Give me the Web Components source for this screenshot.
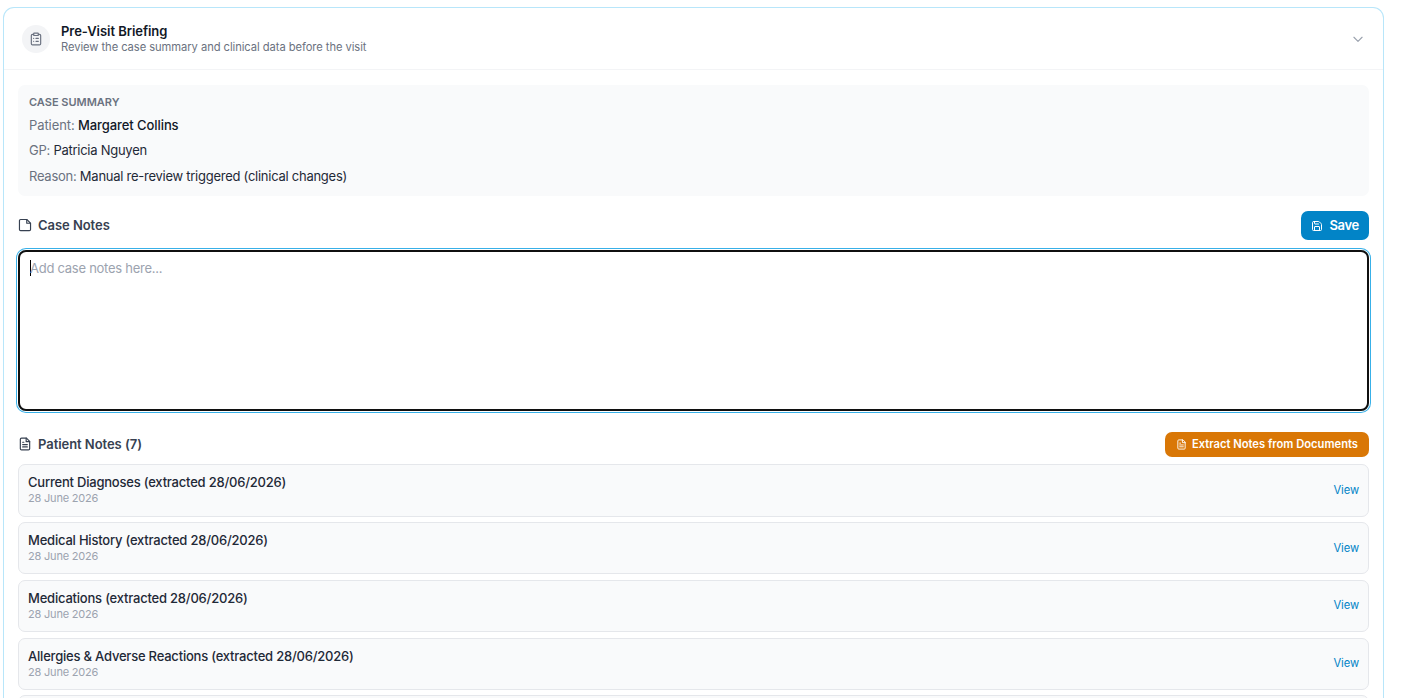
<!DOCTYPE html>
<html lang="en">
<head>
<meta charset="utf-8">
<title>Pre-Visit Briefing</title>
<style>
  body {
    margin: 0;
    height: 698px;
    overflow: hidden;
    background: #fff;
    color: #1f2937;
    font-family: Inter, "Liberation Sans", sans-serif;
    font-size: 13px;
  }

  .patient {
    color: #111827;
    font-weight: 500;
    letter-spacing: -0.08px;
  }

  .case-bar {
    height: 29px;
    margin-top: 15px;
  }

  .patient-bar {
    height: 25px;
    margin-top: 21px;
  }

  .extract {
    --btn-bg: #d97706;
    --btn-padding: 0 11px 0 11px;
    --btn-height: 25px;
    --btn-gap: 5px;
    --btn-icon: 11px;
    --btn-lift: 2px;
    font-size: 11.2px;
    letter-spacing: 0;
  }
</style>
</head>
<body>
<briefing-card heading="Pre-Visit Briefing" subheading="Review the case summary and clinical data before the visit">
  <case-summary>
    <summary-row class="patient" label="Patient:">Margaret Collins</summary-row>
    <summary-row label="GP:">Patricia Nguyen</summary-row>
    <summary-row label="Reason:">Manual re-review triggered (clinical changes)</summary-row>
  </case-summary>
  <section-bar class="case-bar" icon="note" heading="Case Notes">
    <action-button icon="save">Save</action-button>
  </section-bar>
  <notes-field placeholder="Add case notes here..."></notes-field>
  <section-bar class="patient-bar" icon="document" heading="Patient Notes (7)">
    <action-button class="extract" icon="document">Extract Notes from Documents</action-button>
  </section-bar>
  <note-list>
    <note-item date="28 June 2026">Current Diagnoses (extracted 28/06/2026)</note-item>
    <note-item date="28 June 2026">Medical History (extracted 28/06/2026)</note-item>
    <note-item date="28 June 2026">Medications (extracted 28/06/2026)</note-item>
    <note-item date="28 June 2026">Allergies &amp; Adverse Reactions (extracted 28/06/2026)</note-item>
    <note-item></note-item>
  </note-list>
</briefing-card>

<script>
const ICONS = {
  clipboard: `<rect x="8" y="2" width="8" height="4" rx="1"/>
    <path d="M16 4h2a2 2 0 0 1 2 2v14a2 2 0 0 1-2 2H6a2 2 0 0 1-2-2V6a2 2 0 0 1 2-2h2M12 11h4M12 16h4M8 11h.01M8 16h.01"/>`,
  note: `<path d="M15 2.500H4.500a2 2 0 0 0-2 2v15a2 2 0 0 0 2 2h15a2 2 0 0 0 2-2V9z"/><path d="M15 2.500V9h6.500"/>`,
  document: `<path d="M14.5 2H6a2 2 0 0 0-2 2v16a2 2 0 0 0 2 2h12a2 2 0 0 0 2-2V7.500z"/>
    <path d="M14 2v6h6M16 13H8M16 17H8M10 9H8"/>`,
  save: `<path d="M15.200 3a2 2 0 0 1 1.400.6l3.800 3.800a2 2 0 0 1 .6 1.400V19a2 2 0 0 1-2 2H5a2 2 0 0 1-2-2V5a2 2 0 0 1 2-2z"/>
    <path d="M17 21v-7a1 1 0 0 0-1-1H8a1 1 0 0 0-1 1v7M7 3v4a1 1 0 0 0 1 1h7"/>`,
  chevron: `<path d="m5 9 7 7 7-7"/>`,
};

function mount(element, markup) {
  const template = document.createElement('template');
  template.innerHTML = markup;
  element.attachShadow({mode: 'open'});
  element.shadowRoot.appendChild(template.content.cloneNode(true));
}

class UiIcon extends HTMLElement {
  connectedCallback() {
    mount(this, `
      <style>
        :host { display: block; flex: none; width: 14px; height: 14px; }
        svg { display: block; width: 100%; height: 100%; }
      </style>
      <svg viewBox="0 0 24 24" fill="none" stroke="currentColor" stroke-width="2"
        stroke-linecap="round" stroke-linejoin="round">${ICONS[this.getAttribute('name')]}</svg>`);
  }
}

class BriefingCard extends HTMLElement {
  connectedCallback() {
    mount(this, `
      <style>
        :host {
          display: block;
          box-sizing: border-box;
          width: 1381px;
          height: 691px;
          margin: 7px 0 0 3px;
          overflow: hidden;
          border: 1px solid #b8e6fa;
          border-bottom: 0;
          border-radius: 11px 11px 0 0;
        }
        header {
          display: flex;
          align-items: center;
          box-sizing: border-box;
          height: 62px;
          padding: 0 18px;
          border-bottom: 1px solid #f3f4f6;
        }
        .badge {
          display: grid;
          place-items: center;
          width: 28px;
          height: 28px;
          margin-right: 11px;
          border-radius: 50%;
          background: #f3f4f6;
          color: #6b7280;
        }
        .titles { flex: 1; padding-bottom: 1px; }
        h2 {
          margin: 0;
          color: #111827;
          font-size: 13px;
          font-weight: 600;
          line-height: 17px;
          letter-spacing: -0.05px;
        }
        p {
          margin: 0;
          color: #6b7280;
          font-size: 11.2px;
          line-height: 14px;
          letter-spacing: -0.065px;
        }
        .chevron { width: 14px; height: 14px; color: #9ca3af; }
        main { padding: 15px 14px 0; }
      </style>
      <header>
        <div class="badge"><ui-icon name="clipboard"></ui-icon></div>
        <div class="titles">
          <h2>${this.getAttribute('heading')}</h2>
          <p>${this.getAttribute('subheading')}</p>
        </div>
        <ui-icon class="chevron" name="chevron"></ui-icon>
      </header>
      <main><slot></slot></main>`);
  }
}

class CaseSummary extends HTMLElement {
  connectedCallback() {
    mount(this, `
      <style>
        :host {
          display: block;
          box-sizing: border-box;
          height: 111px;
          padding: 10px 11px;
          border-radius: 7px;
          background: #f9fafb;
        }
        h3 {
          margin: 0 0 4px;
          color: #6b7280;
          font-size: 11px;
          font-weight: 600;
          line-height: 14px;
        }
      </style>
      <h3>CASE SUMMARY</h3>
      <slot></slot>`);
  }
}

class SummaryRow extends HTMLElement {
  connectedCallback() {
    mount(this, `
      <style>
        :host { display: block; line-height: 25.4px; letter-spacing: -0.26px; }
        span { color: #6b7280; font-weight: 400; }
      </style>
      <span>${this.getAttribute('label')}</span> <slot></slot>`);
  }
}

class SectionBar extends HTMLElement {
  connectedCallback() {
    mount(this, `
      <style>
        :host { display: flex; align-items: center; gap: 6px; color: #374151; }
        h3 {
          flex: 1;
          margin: 0;
          padding-bottom: 2px;
          font-size: 13px;
          font-weight: 600;
          line-height: 18px;
          letter-spacing: -0.05px;
        }
        ui-icon { padding-bottom: 1px; }
      </style>
      <ui-icon name="${this.getAttribute('icon')}"></ui-icon>
      <h3>${this.getAttribute('heading')}</h3>
      <slot></slot>`);
  }
}

class ActionButton extends HTMLElement {
  connectedCallback() {
    mount(this, `
      <style>
        :host { display: block; font-weight: 600; letter-spacing: -0.3px; }
        button {
          display: flex;
          align-items: center;
          gap: var(--btn-gap, 6px);
          height: var(--btn-height, 29px);
          padding: var(--btn-padding, 0 10px);
          border: 0;
          border-radius: 7px;
          background: var(--btn-bg, #0284c7);
          color: #fff;
          font: inherit;
          letter-spacing: inherit;
        }
        ui-icon { width: var(--btn-icon, 12px); height: var(--btn-icon, 12px); }
        span { padding-bottom: var(--btn-lift, 2px); }
      </style>
      <button>
        <ui-icon name="${this.getAttribute('icon')}"></ui-icon>
        <span><slot></slot></span>
      </button>`);
  }
}

class NotesField extends HTMLElement {
  connectedCallback() {
    mount(this, `
      <style>
        :host {
          display: flex;
          box-sizing: border-box;
          height: 161px;
          margin-top: 10px;
          padding: 8px 10px;
          border: 2px solid #101010;
          border-radius: 8px;
          box-shadow: 0 0 0 1px #fff, 0 0 0 2px #38b0e8;
          color: #9ca3af;
          line-height: 16px;
          letter-spacing: -0.26px;
        }
        i { width: 1px; height: 16px; margin-right: -1px; background: #000; }
      </style>
      <i></i><span>${this.getAttribute('placeholder')}</span>`);
  }
}

class NoteList extends HTMLElement {
  connectedCallback() {
    mount(this, `
      <style>
        :host { display: grid; gap: 5.37px; margin-top: 7px; }
      </style>
      <slot></slot>`);
  }
}

class NoteItem extends HTMLElement {
  connectedCallback() {
    const date = this.getAttribute('date');
    mount(this, `
      <style>
        :host {
          display: flex;
          align-items: center;
          justify-content: space-between;
          box-sizing: border-box;
          height: 52.5px;
          padding: 0 9px 1px;
          border: 1px solid #e5e7eb;
          border-radius: 7px;
          background: #f9fafb;
        }
        .title { font-weight: 500; line-height: 17px; letter-spacing: -0.21px; }
        .date { color: #9ca3af; font-size: 11px; line-height: 14px; letter-spacing: -0.2px; }
        a { color: #0284c7; font-size: 11.2px; letter-spacing: -0.1px; }
      </style>
      <div>
        <div class="title"><slot></slot></div>
        ${date ? `<div class="date">${date}</div>` : ''}
      </div>
      ${date ? '<a>View</a>' : ''}`);
  }
}

window.customElements.define('ui-icon', UiIcon);
window.customElements.define('briefing-card', BriefingCard);
window.customElements.define('case-summary', CaseSummary);
window.customElements.define('summary-row', SummaryRow);
window.customElements.define('section-bar', SectionBar);
window.customElements.define('action-button', ActionButton);
window.customElements.define('notes-field', NotesField);
window.customElements.define('note-list', NoteList);
window.customElements.define('note-item', NoteItem);
</script>
</body>
</html>
